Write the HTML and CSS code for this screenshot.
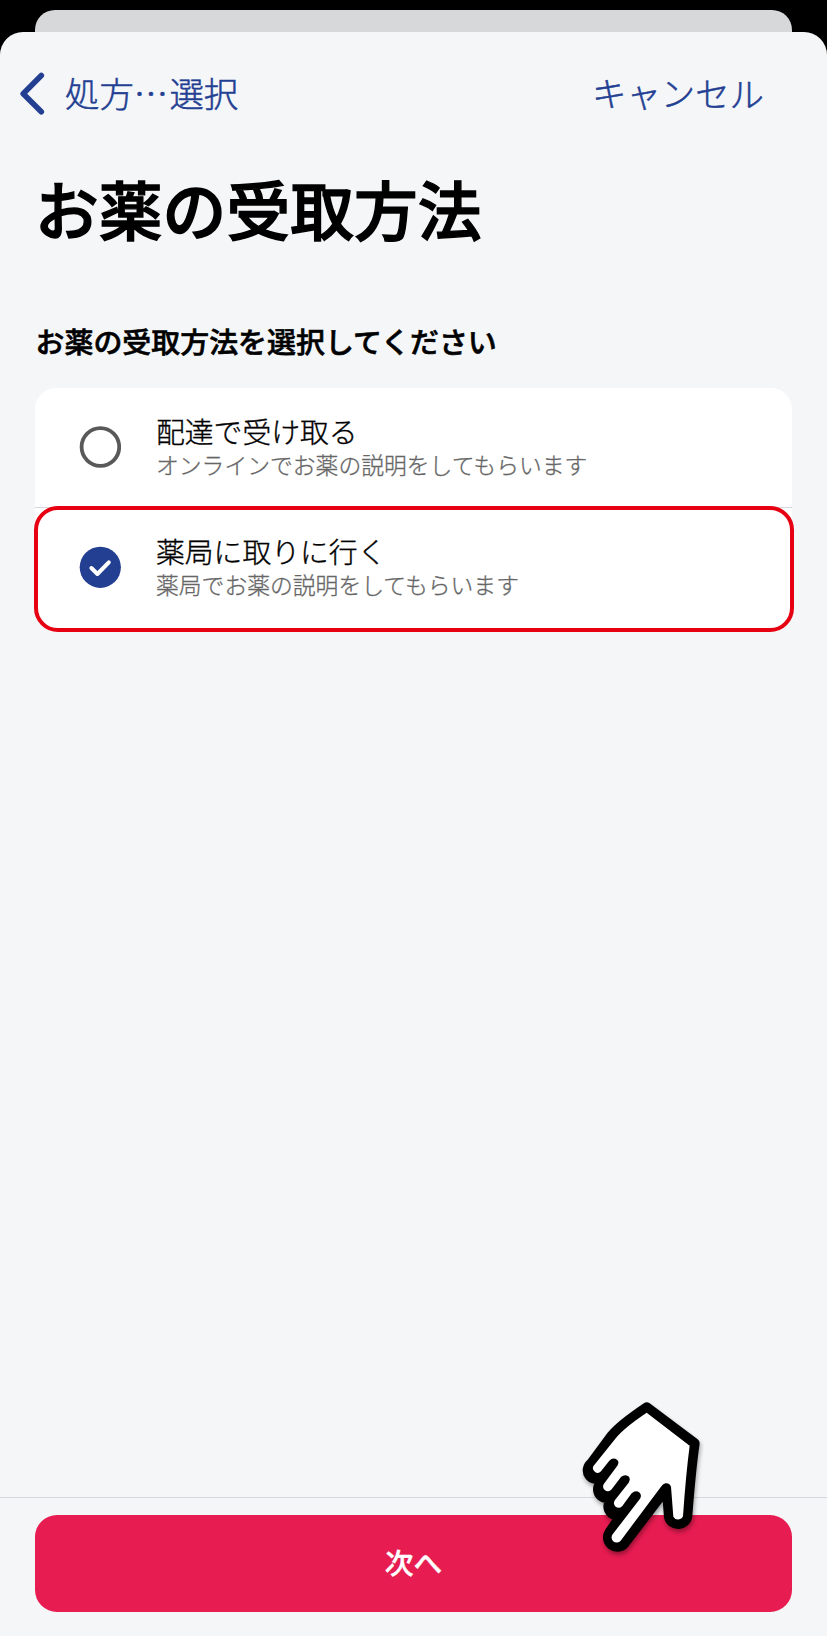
FILE: index.html
```html
<!DOCTYPE html>
<html lang="ja">
<head>
<meta charset="utf-8">
<title>お薬の受取方法</title>
<link rel="stylesheet" href="styles.css">
</head>
<body>
<div class="screen">
  <div class="sheet-behind"></div>
  <main class="sheet">
    <nav class="nav">
      <a class="back">
        <svg class="chevron" width="26" height="44" viewBox="0 0 26 44"><path d="M22.3 3.5 4.2 21.8l18.1 18"/></svg>
        <span class="nav-label">処方<span class="dots">…</span>選択</span>
      </a>
      <a class="cancel nav-label">キャンセル</a>
    </nav>
    <h1 class="title">お薬の受取方法</h1>
    <h2 class="lead">お薬の受取方法を選択してください</h2>
    <div class="options">
      <div class="option option-first">
        <svg class="radio" width="42" height="42" viewBox="0 0 42 42"><circle class="ring" cx="21.4" cy="21" r="18.8"/></svg>
        <div class="texts"><p class="name">配達で受け取る</p><p class="note">オンラインでお薬の説明をしてもらいます</p></div>
      </div>
      <div class="option option-selected">
        <svg class="radio" width="42" height="42" viewBox="0 0 42 42"><circle class="disc" cx="21.3" cy="21.3" r="20.6"/><path class="check" d="m12.4 22 6 6L29.8 16.3"/></svg>
        <div class="texts"><p class="name">薬局に取りに行く</p><p class="note">薬局でお薬の説明をしてもらいます</p></div>
      </div>
    </div>
    <footer class="footer">
      <button class="next">次へ</button>
      <svg class="hand" width="180" height="190" viewBox="0 0 540 570">
        <path class="hand-outline" d="M260 82 404 190Q393 265 382 407A28 28 0 0 1 327 411L320 325 192 492A28 28 0 0 1 148 458L188 399A25 25 0 0 1 154 360L158 346A24 24 0 0 1 121 311L124 292A24 24 0 0 1 94 250L156 166Q180 136 260 82Z"/>
        <path class="hand-fill" d="M260 98 389 197Q378 280 369 408A16 16 0 0 1 340 410L333 320Q328 308 316 310 308 312 303 320L182 482A15 15 0 0 1 158 463L240 356Q246 346 239 338 227 329 215 340L187 378A14 14 0 0 1 165 360L206 308Q213 296 205 289 194 281 183 291L155 328A14 14 0 0 1 132 311L172 257Q179 246 171 239 159 230 148 242L123 274A14 14 0 0 1 101 257L166 176Q190 145 260 98Z"/>
      </svg>
    </footer>
  </main>
</div>
</body>
</html>
```
FILE: styles.css
```css
* { box-sizing: border-box; }
body {
  margin: 0;
  background: #fff;
  font-family: "Noto Sans CJK JP", sans-serif;
}
h1, h2, p { margin: 0; }
.screen {
  display: flex;
  flex-direction: column;
  width: 827px;
  height: 1636px;
  padding-top: 10px;
  background: #000;
}
.sheet-behind {
  height: 22px;
  margin: 0 35px;
  border-radius: 20px 20px 0 0;
  background: #d7d8da;
}
.sheet {
  flex: 1;
  display: flex;
  flex-direction: column;
  border-radius: 23px 23px 0 0;
  background: #f4f6f8;
}
.nav {
  display: flex;
  justify-content: space-between;
  align-items: center;
  height: 124px;
  padding: 0 63px 0 19px;
  color: #233f92;
  font-size: 34.4px;
  font-weight: 300;
  line-height: 50px;
}
.nav-label { padding-bottom: 4px; -webkit-text-stroke: .5px #233f92; }
.back { display: flex; align-items: center; gap: 20px; }
.dots { letter-spacing: 1.2px; }
.chevron { fill: none; stroke: #233f92; stroke-width: 5.6; stroke-linecap: round; stroke-linejoin: round; }
.title {
  padding: 3px 0 0 35px;
  font-size: 63.8px;
  font-weight: 500;
  line-height: 96px;
  -webkit-text-stroke: 1.4px #000;
}
.lead {
  padding: 63px 0 0 35.5px;
  font-size: 28.95px;
  font-weight: 500;
  line-height: 44px;
  -webkit-text-stroke: .6px #000;
}
.options {
  margin: 25.5px 35px 0 35px;
  border-radius: 21px;
  background: #fff;
}
.option {
  display: flex;
  align-items: center;
  gap: 35px;
  height: 120px;
  padding-left: 44px;
}
.option-first { border-bottom: 1px solid #d5d7da; }
.option-selected {
  height: 126px;
  margin: -1.5px -2px 0 -1px;
  border: 4px solid #e60012;
  border-radius: 24px;
  padding: 0 0 4px 41px;
  background: #fff;
}
.radio { flex: none; }
.ring { fill: none; stroke: #595959; stroke-width: 3.8; }
.disc { fill: #233f92; }
.check { fill: none; stroke: #fff; stroke-width: 4; stroke-linecap: round; stroke-linejoin: round; }
.name { font-size: 28.8px; font-weight: 300; line-height: 36px; color: #000; -webkit-text-stroke: .35px #000; }
.note { font-size: 22.8px; font-weight: 300; line-height: 32px; color: #666; -webkit-text-stroke: .3px #666; }
.footer {
  position: relative;
  height: 139px;
  margin-top: auto;
  padding: 17px 35px 0;
  border-top: 1px solid #d5d7da;
}
.next {
  display: block;
  width: 100%;
  height: 97px;
  border: 0;
  border-radius: 22px;
  padding: 0 0 4px;
  background: #e71c51;
  color: #fff;
  font: 500 28.8px "Noto Sans CJK JP", sans-serif;
  -webkit-text-stroke: .4px #fff;
}
.hand {
  position: absolute;
  left: 560px;
  top: -118px;
  filter: drop-shadow(1px 3px 2px rgba(0, 0, 0, .35));
}
.hand-outline { fill: #000; stroke: #000; stroke-width: 30; stroke-linejoin: round; }
.hand-fill { fill: #fff; }
```
